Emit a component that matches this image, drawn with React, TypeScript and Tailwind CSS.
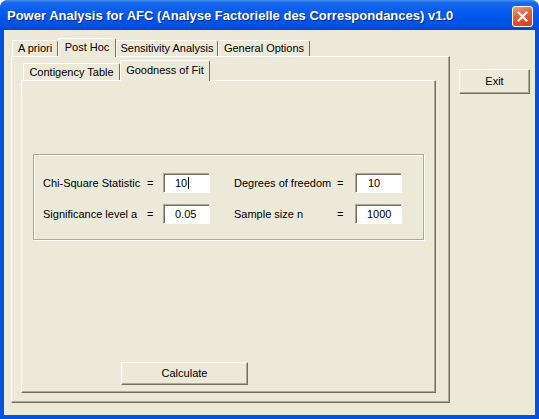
import React from "react";

const font = { fontFamily: '"Liberation Sans", Arial, sans-serif' };

function Raised({ children, className = "" }: { children?: React.ReactNode; className?: string }) {
  return (
    <div
      className={
        "flex items-center justify-center border-t border-l border-white border-r border-b border-r-[#716F64] border-b-[#716F64] shadow-[inset_-1px_-1px_0_#ACA899] bg-[#ECE9D8] text-[11px] text-black " +
        className
      }
    >
      {children}
    </div>
  );
}

function Field({ value, caret = false, pad = "pl-[11px]" }: { value: string; caret?: boolean; pad?: string }) {
  return (
    <div
      className={
        "w-[47px] h-[20px] bg-white border border-t-[#ACA899] border-l-[#ACA899] border-r-white border-b-white shadow-[inset_1px_1px_0_#716F64] flex items-center text-[11px] text-black " +
        pad
      }
    >
      <span>{value}</span>
      {caret && <span className="w-px h-[12px] bg-black ml-px" />}
    </div>
  );
}

function Tab({ label, w, selected = false, h = 16, hs = 19 }: { label: string; w: number; selected?: boolean; h?: number; hs?: number }) {
  return (
    <div
      className={
        "flex items-center justify-center border-t border-l border-white border-r border-r-[#716F64] rounded-t-[2px] text-[11px] text-black bg-[#ECE9D8] " +
        (selected ? "relative z-10 -mb-px pb-[2px]" : "")
      }
      style={{ width: w, height: selected ? hs : h }}
    >
      {label}
    </div>
  );
}

export default function App() {
  return (
    <div className="w-[539px] h-[419px] flex flex-col bg-[#0052DF] rounded-t-[8px] overflow-hidden" style={font}>
      {/* Title bar */}
      <div className="h-[30px] flex items-center pl-[7px] pr-[6px] bg-[linear-gradient(180deg,#4a94f5_0%,#1a6cec_8%,#0a5ff0_30%,#0056ea_60%,#0051df_88%,#0143c4_100%)]">
        <div
          className="flex-1 text-white font-bold text-[13px] [text-shadow:1px_1px_0_#0a2a8a] pt-px"
          style={{ fontFamily: '"Liberation Sans", Arial, sans-serif' }}
        >
          Power Analysis for AFC (Analyse Factorielle des Correspondances) v1.0
        </div>
        <div className="w-[21px] h-[21px] rounded-[3px] border border-white bg-[linear-gradient(160deg,#f0a488_0%,#e2643c_40%,#c8401c_100%)] flex items-center justify-center mt-[2px]">
          <svg width="11" height="11" viewBox="0 0 11 11">
            <path d="M1.5 1.5 L9.5 9.5 M9.5 1.5 L1.5 9.5" stroke="white" strokeWidth="2.2" strokeLinecap="square" />
          </svg>
        </div>
      </div>

      {/* Body */}
      <div className="flex-1 mx-[4px] mb-[4px] bg-[#ECE9D8] flex pt-[8px] pl-[7px]">
        {/* Outer tab control */}
        <div className="w-[439px] h-[365px] flex flex-col">
          <div className="h-[18px] flex items-end pl-px">
            <Tab label="A priori" w={46} />
            <Tab label="Post Hoc" w={58} selected />
            <Tab label="Sensitivity Analysis" w={102} />
            <Tab label="General Options" w={92} />
          </div>
          <div className="flex-1 border-t border-l border-white border-r border-b border-r-[#716F64] border-b-[#716F64] shadow-[inset_-1px_-1px_0_#ACA899] pl-[9px] pt-[3px] pr-[13px] pb-[9px] flex flex-col">
            {/* Inner tab control */}
            <div className="h-[20px] flex items-end pl-[2px]">
              <Tab label="Contigency Table" w={97} h={17} />
              <Tab label="Goodness of Fit" w={90} selected hs={21} />
            </div>
            <div className="flex-1 border-t border-l border-white border-r border-b border-r-[#716F64] border-b-[#716F64] shadow-[inset_-1px_-1px_0_#ACA899] pl-[11px] pt-[73px] flex flex-col">
              {/* Group box */}
              <div className="w-[391px] h-[86px] border border-[#ACA899] shadow-[1px_1px_0_#ffffff,inset_1px_1px_0_#ffffff] pl-[9px] pt-[18px] flex flex-col gap-[11px] text-[11px] text-black">
                <div className="flex items-center h-[20px]">
                  <div className="w-[104px]">Chi-Square Statistic</div>
                  <div className="w-[16px]">=</div>
                  <Field value="10" caret />
                  <div className="w-[24px]" />
                  <div className="w-[103px]">Degrees of freedom</div>
                  <div className="w-[18px]">=</div>
                  <Field value="10" pad="pl-[12px]" />
                </div>
                <div className="flex items-center h-[20px]">
                  <div className="w-[104px]">Significance level a</div>
                  <div className="w-[16px]">=</div>
                  <Field value="0.05" />
                  <div className="w-[24px]" />
                  <div className="w-[103px]">Sample size n</div>
                  <div className="w-[18px]">=</div>
                  <Field value="1000" />
                </div>
              </div>
              <div className="mt-[122px] ml-[88px]">
                <Raised className="w-[127px] h-[23px]">Calculate</Raised>
              </div>
            </div>
          </div>
        </div>
        <div className="ml-[9px] mt-[31px]">
          <Raised className="w-[71px] h-[25px]">Exit</Raised>
        </div>
      </div>
    </div>
  );
}
